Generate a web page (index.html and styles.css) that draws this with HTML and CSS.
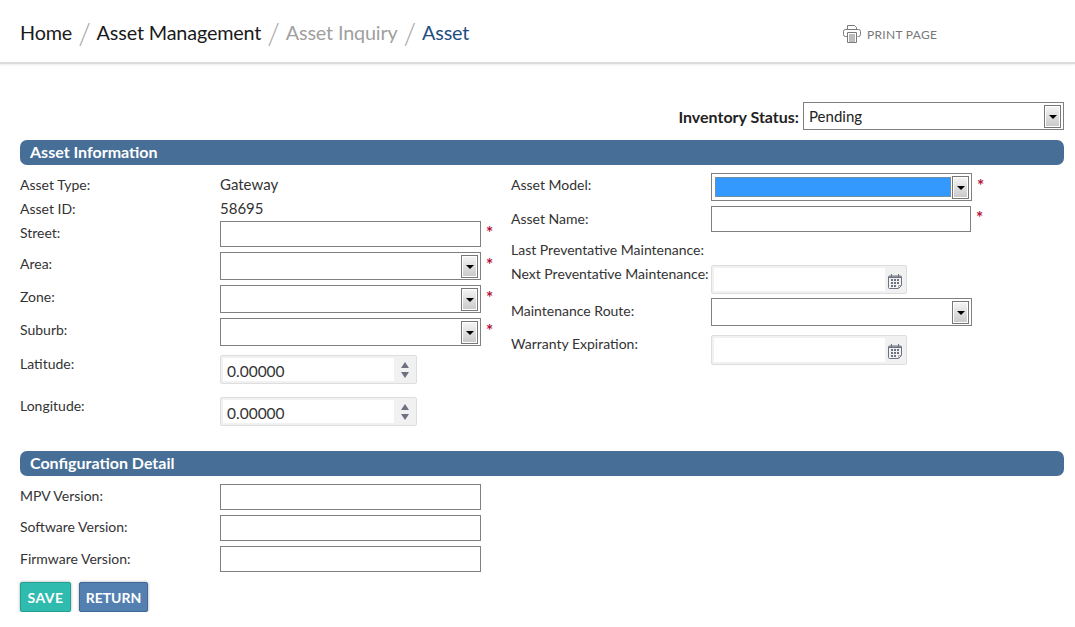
FILE: index.html
```html
<!DOCTYPE html>
<html lang="en">
<head>
  <meta charset="UTF-8">
  <title>Asset</title>
  <link rel="stylesheet" href="styles.css">
</head>
<body>
  <header class="topbar">
    <nav class="crumbs">
      <a class="crumb">Home</a><span class="sep">/</span>
      <a class="crumb">Asset Management</a><span class="sep">/</span>
      <a class="crumb crumb-muted">Asset Inquiry</a><span class="sep">/</span>
      <a class="crumb crumb-current">Asset</a>
    </nav>
    <a class="print">
      <svg class="print-icon" width="18" height="18" viewBox="0 0 18 18" fill="none" stroke="#7a7a7a" stroke-width="1">
        <path d="M4.500 11.500H2.500a2 2 0 0 1-2-2V6.500a2 2 0 0 1 2-2h13a2 2 0 0 1 2 2v3a2 2 0 0 1-2 2h-1"/>
        <path d="M4.500 4.500V.5h7l2 2v2"/>
        <path d="M4.500 7.500h9v10h-9z" fill="#fff"/>
        <path d="M6 10h6M6 12h6M6 14h6M6 16h6"/>
      </svg>
      PRINT PAGE
    </a>
  </header>

  <main class="page">
    <div class="status-row">
      <label class="status-label">Inventory Status:</label>
      <div class="ddl ddl-status"><select><option>Pending</option></select><span class="ddl-btn"></span></div>
    </div>

    <h2 class="section-bar">Asset Information</h2>
    <div class="columns">
      <div class="col col-left">
        <div class="row row-text"><label>Asset Type:</label><span class="value">Gateway</span></div>
        <div class="row row-text"><label>Asset ID:</label><span class="value">58695</span></div>
        <div class="row gap-5"><label>Street:</label><input class="txt" type="text"><span class="req">*</span></div>
        <div class="row gap-5"><label>Area:</label><div class="ddl"><select></select><span class="ddl-btn"></span></div><span class="req">*</span></div>
        <div class="row gap-5"><label>Zone:</label><div class="ddl"><select></select><span class="ddl-btn"></span></div><span class="req">*</span></div>
        <div class="row gap-9"><label>Suburb:</label><div class="ddl"><select></select><span class="ddl-btn"></span></div><span class="req">*</span></div>
        <div class="row row-soft gap-13"><label>Latitude:</label>
          <div class="soft"><input type="text" value="0.00000"><span class="spin"><i class="up"></i><i class="down"></i></span></div>
        </div>
        <div class="row row-soft"><label>Longitude:</label>
          <div class="soft"><input type="text" value="0.00000"><span class="spin"><i class="up"></i><i class="down"></i></span></div>
        </div>
      </div>

      <div class="col col-right">
        <div class="row gap-5"><label>Asset Model:</label><div class="ddl ddl-focus"><select></select><span class="ddl-btn"></span></div><span class="req">*</span></div>
        <div class="row row-name"><label class="label-low">Asset Name:</label><input class="txt" type="text"><span class="req">*</span></div>
        <div class="row row-last"><label>Last Preventative Maintenance:</label></div>
        <div class="row row-soft gap-4"><label>Next Preventative Maintenance:</label>
          <div class="soft soft-date"><input type="text">
            <svg class="cal" width="14" height="15" viewBox="0 0 14 15"><use href="#cal-icon"/></svg>
          </div>
        </div>
        <div class="row gap-9"><label class="label-low">Maintenance Route:</label><div class="ddl ddl-route"><select></select><span class="ddl-btn"></span></div></div>
        <div class="row row-soft"><label>Warranty Expiration:</label>
          <div class="soft soft-date soft-tall"><input type="text">
            <svg class="cal" width="14" height="15" viewBox="0 0 14 15"><use href="#cal-icon"/></svg>
          </div>
        </div>
      </div>
    </div>

    <h2 class="section-bar section-config">Configuration Detail</h2>
    <div class="col-config">
      <div class="row gap-5"><label>MPV Version:</label><input class="txt" type="text"></div>
      <div class="row gap-5"><label>Software Version:</label><input class="txt" type="text"></div>
      <div class="row"><label class="label-low">Firmware Version:</label><input class="txt" type="text"></div>
    </div>

    <div class="actions">
      <button class="btn btn-save">SAVE</button>
      <button class="btn btn-return">RETURN</button>
    </div>
  </main>

  <svg width="0" height="0" class="defs">
    <symbol id="cal-icon" viewBox="0 0 14 15">
      <path d="M1.500 2h11a1 1 0 0 1 1 1v8.500l-3 3h-9a1 1 0 0 1-1-1V3a1 1 0 0 1 1-1z" fill="#f2f2f2" stroke="#6e7280"/>
      <path d="M13 11.500h-2.500v2.500" fill="none" stroke="#a5a8b0"/>
      <path d="M1 2.500h12v1.500H1z" fill="#6e7280"/>
      <path d="M3.500 0v3M10.500 0v3" stroke="#6e7280"/>
      <path d="M3 5h2v2H3zM6 5h2v2H6zM9 5h2v2H9zM3 8h2v2H3zM6 8h2v2H6zM9 8h2v2H9zM3 11h2v2H3zM6 11h2v2H6z" fill="#6e7280"/>
    </symbol>
  </svg>
</body>
</html>
```

FILE: styles.css
```css
* {
  box-sizing: border-box;
}
body {
  margin: 0;
  font-family: "Lato", "Liberation Sans", sans-serif;
  font-size: 14px;
  color: #333;
  background: #fff;
}
.defs {
  display: block;
  height: 0;
}

/* top bar */
.topbar {
  height: 64px;
  display: flex;
  align-items: center;
  padding: 0 0 0 20px;
  border-bottom: 2px solid #dcdcdc;
  box-shadow: 0 1px 2px rgba(0, 0, 0, 0.08);
}
.crumbs {
  display: flex;
  align-items: center;
  width: 823px;
  height: 62px;
  padding-top: 2px;
  font-size: 19.800px;
  letter-spacing: -0.15px;
  color: #1a1a1a;
}
.crumb-muted {
  color: #a0a0a0;
}
.crumb-current {
  color: #1f4f82;
}
.sep {
  color: #a8a8a8;
  font-size: 29px;
  font-weight: 300;
  margin: 0 6px;
}
.print {
  display: flex;
  align-items: center;
  gap: 6px;
  padding-top: 6px;
  font-size: 12px;
  letter-spacing: 0.3px;
  color: #777;
}

/* page */
.page {
  padding: 38px 11px 0 20px;
}
.status-row {
  display: flex;
  justify-content: flex-end;
  align-items: center;
  gap: 4px;
  height: 28px;
  margin-bottom: 10px;
}
.status-label {
  font-weight: 700;
  font-size: 16px;
  color: #222;
}
.section-bar {
  margin: 0;
  height: 25px;
  line-height: 24px;
  padding-left: 10px;
  font-size: 16px;
  font-weight: 700;
  color: #fff;
  background: #466e96;
  border-radius: 7px;
}
.section-config {
  margin-top: 25px;
}
.columns {
  display: flex;
  padding-top: 8px;
  height: 261px;
}
.col-left {
  width: 491px;
}
.col-config {
  padding-top: 8px;
}

/* form rows */
.row {
  display: flex;
  align-items: flex-start;
}
.row label {
  flex: 0 0 200px;
  line-height: 24px;
  white-space: nowrap;
}
.row .label-low {
  padding-top: 1px;
}
.row-text {
  height: 24px;
  line-height: 24px;
}
.value {
  font-size: 15px;
  line-height: 23px;
}
.row-soft label {
  line-height: 18px;
}
.row-name {
  margin-bottom: 6px;
}
.row-last {
  height: 24px;
  margin-bottom: 3px;
}
.gap-4 { margin-bottom: 4px; }
.gap-5 { margin-bottom: 5px; }
.gap-9 { margin-bottom: 9px; }
.gap-13 { margin-bottom: 13px; }

.txt {
  width: 261px;
  height: 26px;
  border: 1px solid #808080;
  background: #fff;
  padding: 0 5px;
  font: inherit;
}
.col-right .txt {
  width: 260px;
}
.req {
  margin-left: 5px;
  line-height: 24px;
  color: #b5103c;
  font-size: 17px;
  font-weight: 700;
}
.ddl + .req {
  line-height: 26px;
}

/* dropdown */
.ddl {
  position: relative;
  width: 261px;
  height: 28px;
  border: 1px solid #808080;
  background: #fff;
}
.ddl-status select {
  font-size: 15px;
}
.ddl select {
  appearance: none;
  display: block;
  width: 100%;
  height: 100%;
  border: 0;
  background: transparent;
  padding: 0 5px;
  font-family: inherit;
  color: #222;
}
.ddl-btn {
  position: absolute;
  top: 2px;
  right: 2px;
  width: 17px;
  height: 23px;
  border: 1px solid #777;
  outline: 1px solid #fff;
  outline-offset: -2px;
  background: linear-gradient(#f6f6f6, #c8c8c8);
}
.ddl-btn::after {
  content: "";
  position: absolute;
  left: 4px;
  top: 9px;
  border: 4px solid transparent;
  border-top: 4px solid #000;
  border-bottom: 0;
}
.ddl-focus::before {
  content: "";
  position: absolute;
  left: 3px;
  right: 20px;
  top: 3px;
  bottom: 3px;
  background: #3399ff;
  border: 1px dotted #a88a5a;
}

/* numeric and date fields */
.soft {
  display: flex;
  align-items: center;
  width: 197px;
  height: 29px;
  padding: 2px 0 2px 2px;
  background: #f1f1f1;
  border: 1px solid #dedede;
  border-radius: 2px;
}
.soft input {
  width: 171px;
  height: 100%;
  border: 0;
  background: #fff;
  padding: 2px 4px 0;
  font: 15.500px "Lato", sans-serif;
  color: #333;
}
.soft-date {
  width: 196px;
}
.soft-tall {
  height: 30px;
}
.spin {
  display: flex;
  flex-direction: column;
  gap: 4px;
  margin-left: 7px;
}
.spin i {
  display: block;
  border-left: 4px solid transparent;
  border-right: 4px solid transparent;
}
.spin .up {
  border-bottom: 6px solid #6e7280;
}
.spin .down {
  border-top: 6px solid #6e7280;
}
.cal {
  margin: 3px 0 0 3px;
}

/* buttons */
.actions {
  display: flex;
  gap: 8px;
  margin-top: 10px;
}
.btn {
  height: 30px;
  border-radius: 2px;
  font: 700 14px "Lato", sans-serif;
  letter-spacing: 0.4px;
  color: #fff;
  padding: 0;
  box-shadow: 0 0 3px rgba(0, 0, 0, 0.35);
}
.btn-save {
  width: 51px;
  background: #2fbbae;
  border: 1px solid #22a094;
}
.btn-return {
  width: 69px;
  letter-spacing: 0;
  background: #5380b0;
  border: 1px solid #3f6896;
}
```
